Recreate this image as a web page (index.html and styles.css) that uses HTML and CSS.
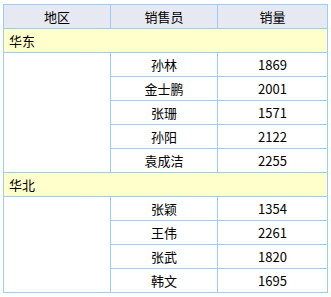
FILE: index.html
```html
<!DOCTYPE html>
<html lang="zh">
<head>
<meta charset="utf-8">
<link rel="stylesheet" href="styles.css">
</head>
<body>
<table class="sales">
  <colgroup><col class="c1"><col class="c2"><col class="c3"></colgroup>
  <thead>
    <tr class="head"><th>地区</th><th>销售员</th><th>销量</th></tr>
  </thead>
  <tbody>
    <tr class="group"><td colspan="3">华东</td></tr>
    <tr><td class="blank" rowspan="5"></td><td>孙林</td><td>1869</td></tr>
    <tr><td>金士鹏</td><td>2001</td></tr>
    <tr><td>张珊</td><td>1571</td></tr>
    <tr><td>孙阳</td><td>2122</td></tr>
    <tr><td>袁成洁</td><td>2255</td></tr>
    <tr class="group"><td colspan="3">华北</td></tr>
    <tr><td class="blank" rowspan="4"></td><td>张颖</td><td>1354</td></tr>
    <tr><td>王伟</td><td>2261</td></tr>
    <tr><td>张武</td><td>1820</td></tr>
    <tr><td>韩文</td><td>1695</td></tr>
  </tbody>
</table>
</body>
</html>
```
FILE: styles.css
```css
html, body { background: #ffffff; }
body {
  margin: 4px 0 0 3px;
  font-family: "Noto Sans CJK SC", "Noto Sans", sans-serif;
  font-size: 13px;
  color: #000;
}
.sales {
  border-collapse: collapse;
  table-layout: fixed;
  width: 324px;
}
.c1 { width: 107px; }
.c2 { width: 107px; }
.c3 { width: 110px; }
.sales th, .sales td {
  border: 1px solid #99ccff;
  height: 23px;
  padding: 0;
  box-sizing: border-box;
  text-align: center;
  font-weight: normal;
  line-height: 23px;
  vertical-align: middle;
}
.sales tr { height: 24px; }
.head th { background: #e6e9f2; }
.group td {
  background: #ffffcc;
  text-align: left;
  padding-left: 5px;
}
```
